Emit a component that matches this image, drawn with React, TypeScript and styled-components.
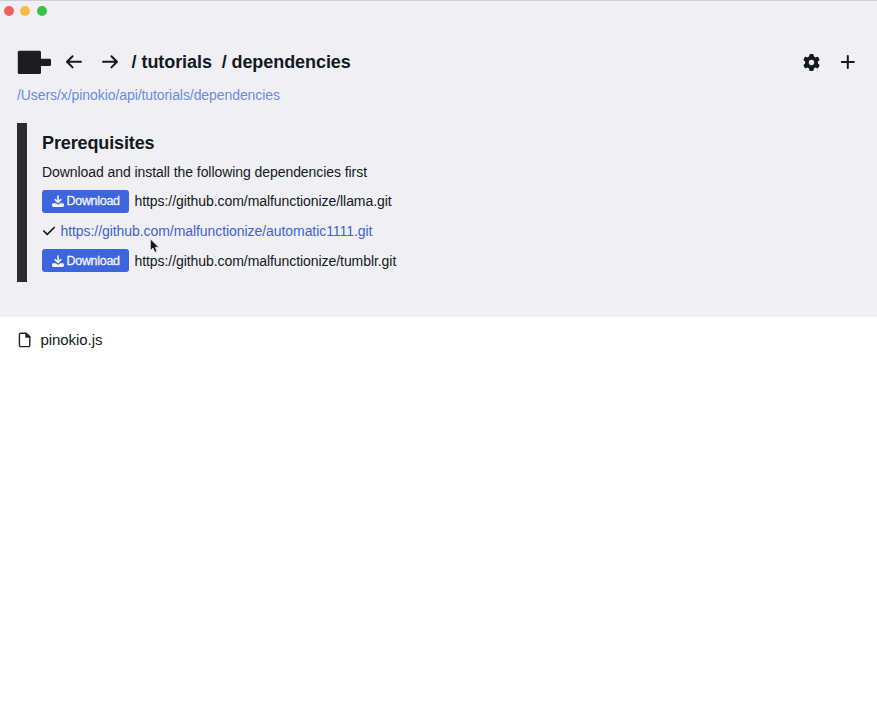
import React from "react";
import styled, { createGlobalStyle } from "styled-components";
import { FaCheck, FaGear } from "react-icons/fa6";

const GlobalStyle = createGlobalStyle`
  * { box-sizing: border-box; }
  body {
    margin: 0;
    background: #fff;
    color: #111a22;
    font-family: "Liberation Sans", Arial, sans-serif;
    font-size: 14px;
  }
  svg { display: block; flex: none; }
`;

const Window = styled.main`
  position: relative;
  height: 720px;
  overflow: hidden;
`;

const Header = styled.header`
  height: 317px;
  background: #f0eff4;
  border-top: 1px solid #cfced3;
`;

const TitleBar = styled.div`
  display: flex;
  gap: 6.4px;
  height: 20px;
  padding: 5px 0 0 4px;
`;

const Light = styled.span<{ $color: string }>`
  width: 10px;
  height: 10px;
  border-radius: 50%;
  background: ${(p) => p.$color};
`;

const Nav = styled.nav`
  display: flex;
  align-items: center;
  height: 36px;
  margin-top: 23px;
  padding: 0 20px 0 17px;
`;

const IconButton = styled.button<{ $gap: number }>`
  display: flex;
  margin: 0 0 0 ${(p) => p.$gap}px;
  padding: 0;
  border: 0;
  background: none;
  color: inherit;
`;

const LineIcon = styled.svg`
  fill: none;
  stroke: currentColor;
  stroke-width: 2;
  stroke-linecap: round;
  stroke-linejoin: round;
`;

const Crumbs = styled.h1`
  display: flex;
  gap: 9.8px;
  flex: 1;
  margin: 0 0 0 12.6px;
  font-size: 18px;
  line-height: 24px;
  letter-spacing: -0.07px;
  white-space: pre;
`;

const PathLink = styled.a`
  display: block;
  margin: 5px 0 0 17px;
  color: #6b8ae6;
  line-height: 20px;
  letter-spacing: -0.075px;
`;

const Panel = styled.section`
  height: 159px;
  margin: 18px 17px 0;
  padding: 8px 0 0 15px;
  border-left: 10px solid #2b2b2f;
  letter-spacing: -0.065px;
`;

const Heading = styled.h2`
  margin: 0;
  font-size: 18px;
  line-height: 24px;
  letter-spacing: -0.12px;
`;

const Intro = styled.p`
  margin: 7px 0 4.5px;
  line-height: 20px;
`;

const Row = styled.div<{ $gap: number }>`
  display: flex;
  align-items: center;
  gap: ${(p) => p.$gap}px;
  height: 29.7px;
`;

const DownloadButton = styled.button`
  display: flex;
  align-items: center;
  gap: 3px;
  width: 87px;
  height: 23px;
  padding: 0 0 0 9.5px;
  border: 0;
  border-radius: 3px;
  background: #3d65dd;
  color: #f3f4fc;
  font: 12.5px "Liberation Sans", Arial, sans-serif;
  letter-spacing: -0.3px;
  -webkit-text-stroke: 0.3px #f3f4fc;
`;

const Url = styled.span<{ $done?: boolean }>`
  color: ${(p) => (p.$done ? "#4164cf" : "inherit")};
`;

const FileRow = styled.div`
  display: flex;
  align-items: center;
  gap: 9.5px;
  height: 46px;
  padding-left: 18px;
  font-size: 15px;
  line-height: 18px;
  letter-spacing: -0.06px;
`;

const Pointer = styled.svg`
  position: absolute;
  left: 149px;
  top: 238px;
`;

const DownloadIcon = () => (
  <svg width="12" height="12" viewBox="0 0 12 12">
    <path d="M6 1v6.2M3.2 4.7 6 7.4l2.8-2.7" fill="none" stroke="currentColor" strokeWidth="1.6" strokeLinecap="round" strokeLinejoin="round" />
    <path d="M1.4 8.2h2.2L6 9.8l2.4-1.6h2.2A1.4 1.4 0 0 1 12 9.6v.9a1.4 1.4 0 0 1-1.4 1.4H1.4A1.4 1.4 0 0 1 0 10.500v-.9a1.4 1.4 0 0 1 1.4-1.4z" fill="currentColor" />
  </svg>
);

const repos = [
  { url: "https://github.com/malfunctionize/llama.git", done: false },
  { url: "https://github.com/malfunctionize/automatic1111.git", done: true },
  { url: "https://github.com/malfunctionize/tumblr.git", done: false },
];

export default function App() {
  return (
    <Window>
      <GlobalStyle />
      <Header>
        <TitleBar>
          <Light $color="#ee6259" />
          <Light $color="#f4bb4b" />
          <Light $color="#3ac14d" />
        </TitleBar>
        <Nav>
          <svg width="34" height="24" viewBox="0 0 34 24" fill="#1c1d20">
            <rect x="0.8" y="0.8" width="23.2" height="23.2" rx="1.5" />
            <rect x="22" y="8.7" width="12" height="7.4" rx="1.4" />
          </svg>
          <IconButton $gap={14} aria-label="Back">
            <LineIcon width="18" height="18" viewBox="0 0 18 18">
              <path d="M7.6 3.2 2 8.8l5.6 5.6M2.3 8.8H16" />
            </LineIcon>
          </IconButton>
          <IconButton $gap={18} aria-label="Forward">
            <LineIcon width="18" height="18" viewBox="0 0 18 18">
              <path d="m10.4 3.2 5.6 5.6-5.6 5.6M15.7 8.8H2" />
            </LineIcon>
          </IconButton>
          <Crumbs>
            <span>/ tutorials</span>
            <span>/ dependencies</span>
          </Crumbs>
          <IconButton $gap={0} aria-label="Settings"><FaGear size={17} /></IconButton>
          <IconButton $gap={19} aria-label="Add">
            <LineIcon width="18" height="18" viewBox="0 0 18 18">
              <path d="M8.8 2.9v12M2.8 8.9h12" />
            </LineIcon>
          </IconButton>
        </Nav>
        <PathLink>/Users/x/pinokio/api/tutorials/dependencies</PathLink>
        <Panel>
          <Heading>Prerequisites</Heading>
          <Intro>Download and install the following dependencies first</Intro>
          {repos.map((repo) => (
            <Row key={repo.url} $gap={repo.done ? 4.5 : 5.5}>
              {repo.done ? (
                <FaCheck size={14} />
              ) : (
                <DownloadButton>
                  <DownloadIcon />
                  Download
                </DownloadButton>
              )}
              <Url $done={repo.done}>{repo.url}</Url>
            </Row>
          ))}
        </Panel>
      </Header>
      <FileRow>
        <svg width="13" height="16" viewBox="0 0 13 16" fill="none" stroke="#22262b" strokeWidth="1.4" strokeLinejoin="round">
          <path d="M2.8 1.2h5.4l3.6 3.6v8.4a1.4 1.4 0 0 1-1.4 1.4H2.8a1.4 1.4 0 0 1-1.4-1.4V2.6a1.4 1.4 0 0 1 1.4-1.4z" />
          <path d="M8 1.4V5h3.6z" fill="#22262b" />
        </svg>
        pinokio.js
      </FileRow>
      <Pointer width="11" height="16" viewBox="0 0 11 16">
        <path d="M1.4 1v11.4l2.6-2.3 1.8 4.2 2.2-1-1.8-4H9.8z" fill="#14181e" stroke="#fff" strokeWidth="0.6" />
      </Pointer>
    </Window>
  );
}
